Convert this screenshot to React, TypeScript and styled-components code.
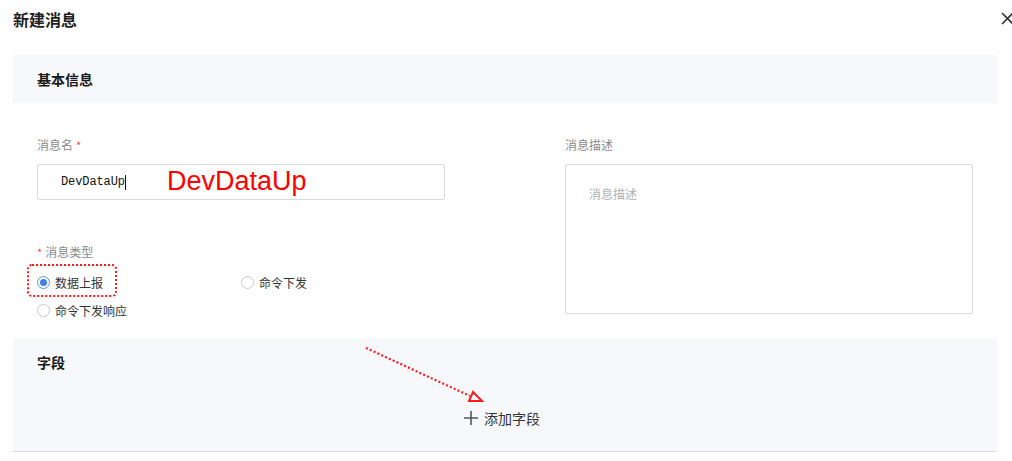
import React from "react";
import styled, { createGlobalStyle } from "styled-components";

const GlobalStyle = createGlobalStyle`
  html, body { margin: 0; padding: 0; background: #ffffff; }
  body { font-family: "Noto Sans CJK SC", "Noto Sans", sans-serif; }
  * { box-sizing: border-box; }
`;

const Page = styled.div`
  position: relative;
  width: 1012px;
  height: 461px;
  overflow: hidden;
  padding-left: 13px;
`;

const Header = styled.div`
  display: flex;
  align-items: center;
  justify-content: space-between;
  height: 37px;
  margin-bottom: 18px;
`;

const Title = styled.h1`
  margin: 0;
  font-size: 16px;
  font-weight: 700;
  color: #1f1f1f;
  line-height: 20px;
`;

const CloseBtn = styled.button`
  display: flex;
  width: 13px;
  height: 13px;
  padding: 0;
  margin-right: -2px;
  border: none;
  background: none;
  cursor: pointer;
`;

const Panel = styled.section`
  width: 984px;
  background: #f7f8fc;
`;

const SectionHead = styled.div`
  display: flex;
  align-items: center;
  height: 48px;
  padding-left: 24px;
  font-size: 14px;
  font-weight: 700;
  color: #1a1a1a;
`;

const Form = styled.div`
  width: 984px;
  display: grid;
  grid-template-columns: 408px 408px;
  column-gap: 120px;
  padding: 33px 0 14px 24px;
`;

const Column = styled.div`
  display: flex;
  flex-direction: column;
`;

const Label = styled.div<{ $gap?: number }>`
  font-size: 12px;
  line-height: 18px;
  color: #8a8a8a;
  margin-bottom: ${(p) => p.$gap ?? 10}px;
`;

const Star = styled.span`
  color: #f04848;
  font-size: 11px;
  margin: 0 3px;
`;

const InputWrap = styled.div`
  position: relative;
  width: 408px;
`;

const TextInput = styled.div`
  display: flex;
  align-items: center;
  height: 36px;
  padding-left: 23px;
  border: 1px solid #dadada;
  border-radius: 2px;
  font-family: "Liberation Mono", monospace;
  font-size: 12px;
  letter-spacing: -0.1px;
  color: #111;
  margin-bottom: 43px;
`;

const Caret = styled.span`
  display: inline-block;
  width: 1px;
  height: 15px;
  background: #111;
`;

const Annotation = styled.span`
  position: absolute;
  left: 130px;
  top: -1px;
  font-family: "Liberation Sans", Arial, sans-serif;
  font-size: 27px;
  color: #ff0000;
  line-height: 36px;
`;

const RadioGrid = styled.div`
  display: grid;
  grid-template-columns: 204px 204px;
  grid-auto-rows: 28px;
`;

const RadioItem = styled.label`
  position: relative;
  display: flex;
  align-items: center;
  gap: 5px;
  font-size: 12px;
  color: #333;
  cursor: pointer;
`;

const RadioCircle = styled.span<{ $checked?: boolean }>`
  width: 13px;
  height: 13px;
  border-radius: 50%;
  border: 1px solid ${(p) => (p.$checked ? "#5b95e6" : "#c8c8c8")};
  background: #fff;
  display: flex;
  align-items: center;
  justify-content: center;
  &::after {
    content: "";
    width: 7px;
    height: 7px;
    border-radius: 50%;
    background: ${(p) => (p.$checked ? "#3f82e4" : "transparent")};
  }
`;

const DottedFrame = styled.span`
  position: absolute;
  left: -10px;
  top: -4px;
  width: 90px;
  height: 33px;
  border: 2px dotted #ff1a1a;
  border-radius: 5px;
  pointer-events: none;
`;

const TextArea = styled.div`
  height: 150px;
  border: 1px solid #dadada;
  border-radius: 2px;
  padding: 20px 0 0 23px;
  font-size: 12px;
  line-height: 18px;
  color: #b0b0b0;
`;

const FieldBody = styled.div`
  display: flex;
  align-items: center;
  justify-content: center;
  height: 66px;
  border-bottom: 1px solid #dcdcdc;
  padding: 0 6px 1px 0;
`;

const AddButton = styled.button`
  display: flex;
  align-items: center;
  gap: 6px;
  border: none;
  background: none;
  padding: 0;
  font-family: "Noto Sans CJK SC", sans-serif;
  font-size: 14px;
  color: #333;
  cursor: pointer;
`;

const ArrowSvg = styled.svg`
  position: absolute;
  left: 0;
  top: 0;
  pointer-events: none;
`;

export default function App() {
  return (
    <>
      <GlobalStyle />
      <Page>
        <Header>
          <Title>新建消息</Title>
          <CloseBtn aria-label="close">
            <svg width="13" height="13" viewBox="0 0 13 13">
              <path d="M1 1 L12 12 M12 1 L1 12" stroke="#333" strokeWidth="1.6" />
            </svg>
          </CloseBtn>
        </Header>

        <Panel>
          <SectionHead>基本信息</SectionHead>
        </Panel>

        <Form>
          <Column>
            <Label>
              消息名<Star>*</Star>
            </Label>
            <InputWrap>
              <TextInput>
                DevDataUp<Caret />
              </TextInput>
              <Annotation>DevDataUp</Annotation>
            </InputWrap>
            <Label $gap={7}>
              <Star style={{ marginLeft: 0 }}>*</Star>消息类型
            </Label>
            <RadioGrid>
              <RadioItem>
                <RadioCircle $checked />
                数据上报
                <DottedFrame />
              </RadioItem>
              <RadioItem>
                <RadioCircle />
                命令下发
              </RadioItem>
              <RadioItem>
                <RadioCircle />
                命令下发响应
              </RadioItem>
            </RadioGrid>
          </Column>
          <Column>
            <Label>消息描述</Label>
            <TextArea>消息描述</TextArea>
          </Column>
        </Form>

        <Panel>
          <SectionHead>字段</SectionHead>
          <FieldBody>
            <AddButton>
              <svg width="14" height="14" viewBox="0 0 14 14">
                <path d="M7 0 V14 M0 7 H14" stroke="#555" strokeWidth="1.6" />
              </svg>
              添加字段
            </AddButton>
          </FieldBody>
        </Panel>

        <ArrowSvg width="1012" height="461">
          <path
            d="M366 348 L470 396"
            stroke="#ff1a1a"
            strokeWidth="2.2"
            strokeDasharray="2 2.2"
            fill="none"
          />
          <path
            d="M473 392 L482 401 L469 401 Z"
            stroke="#ff1a1a"
            strokeWidth="2"
            fill="none"
            strokeLinejoin="miter"
          />
        </ArrowSvg>
      </Page>
    </>
  );
}
